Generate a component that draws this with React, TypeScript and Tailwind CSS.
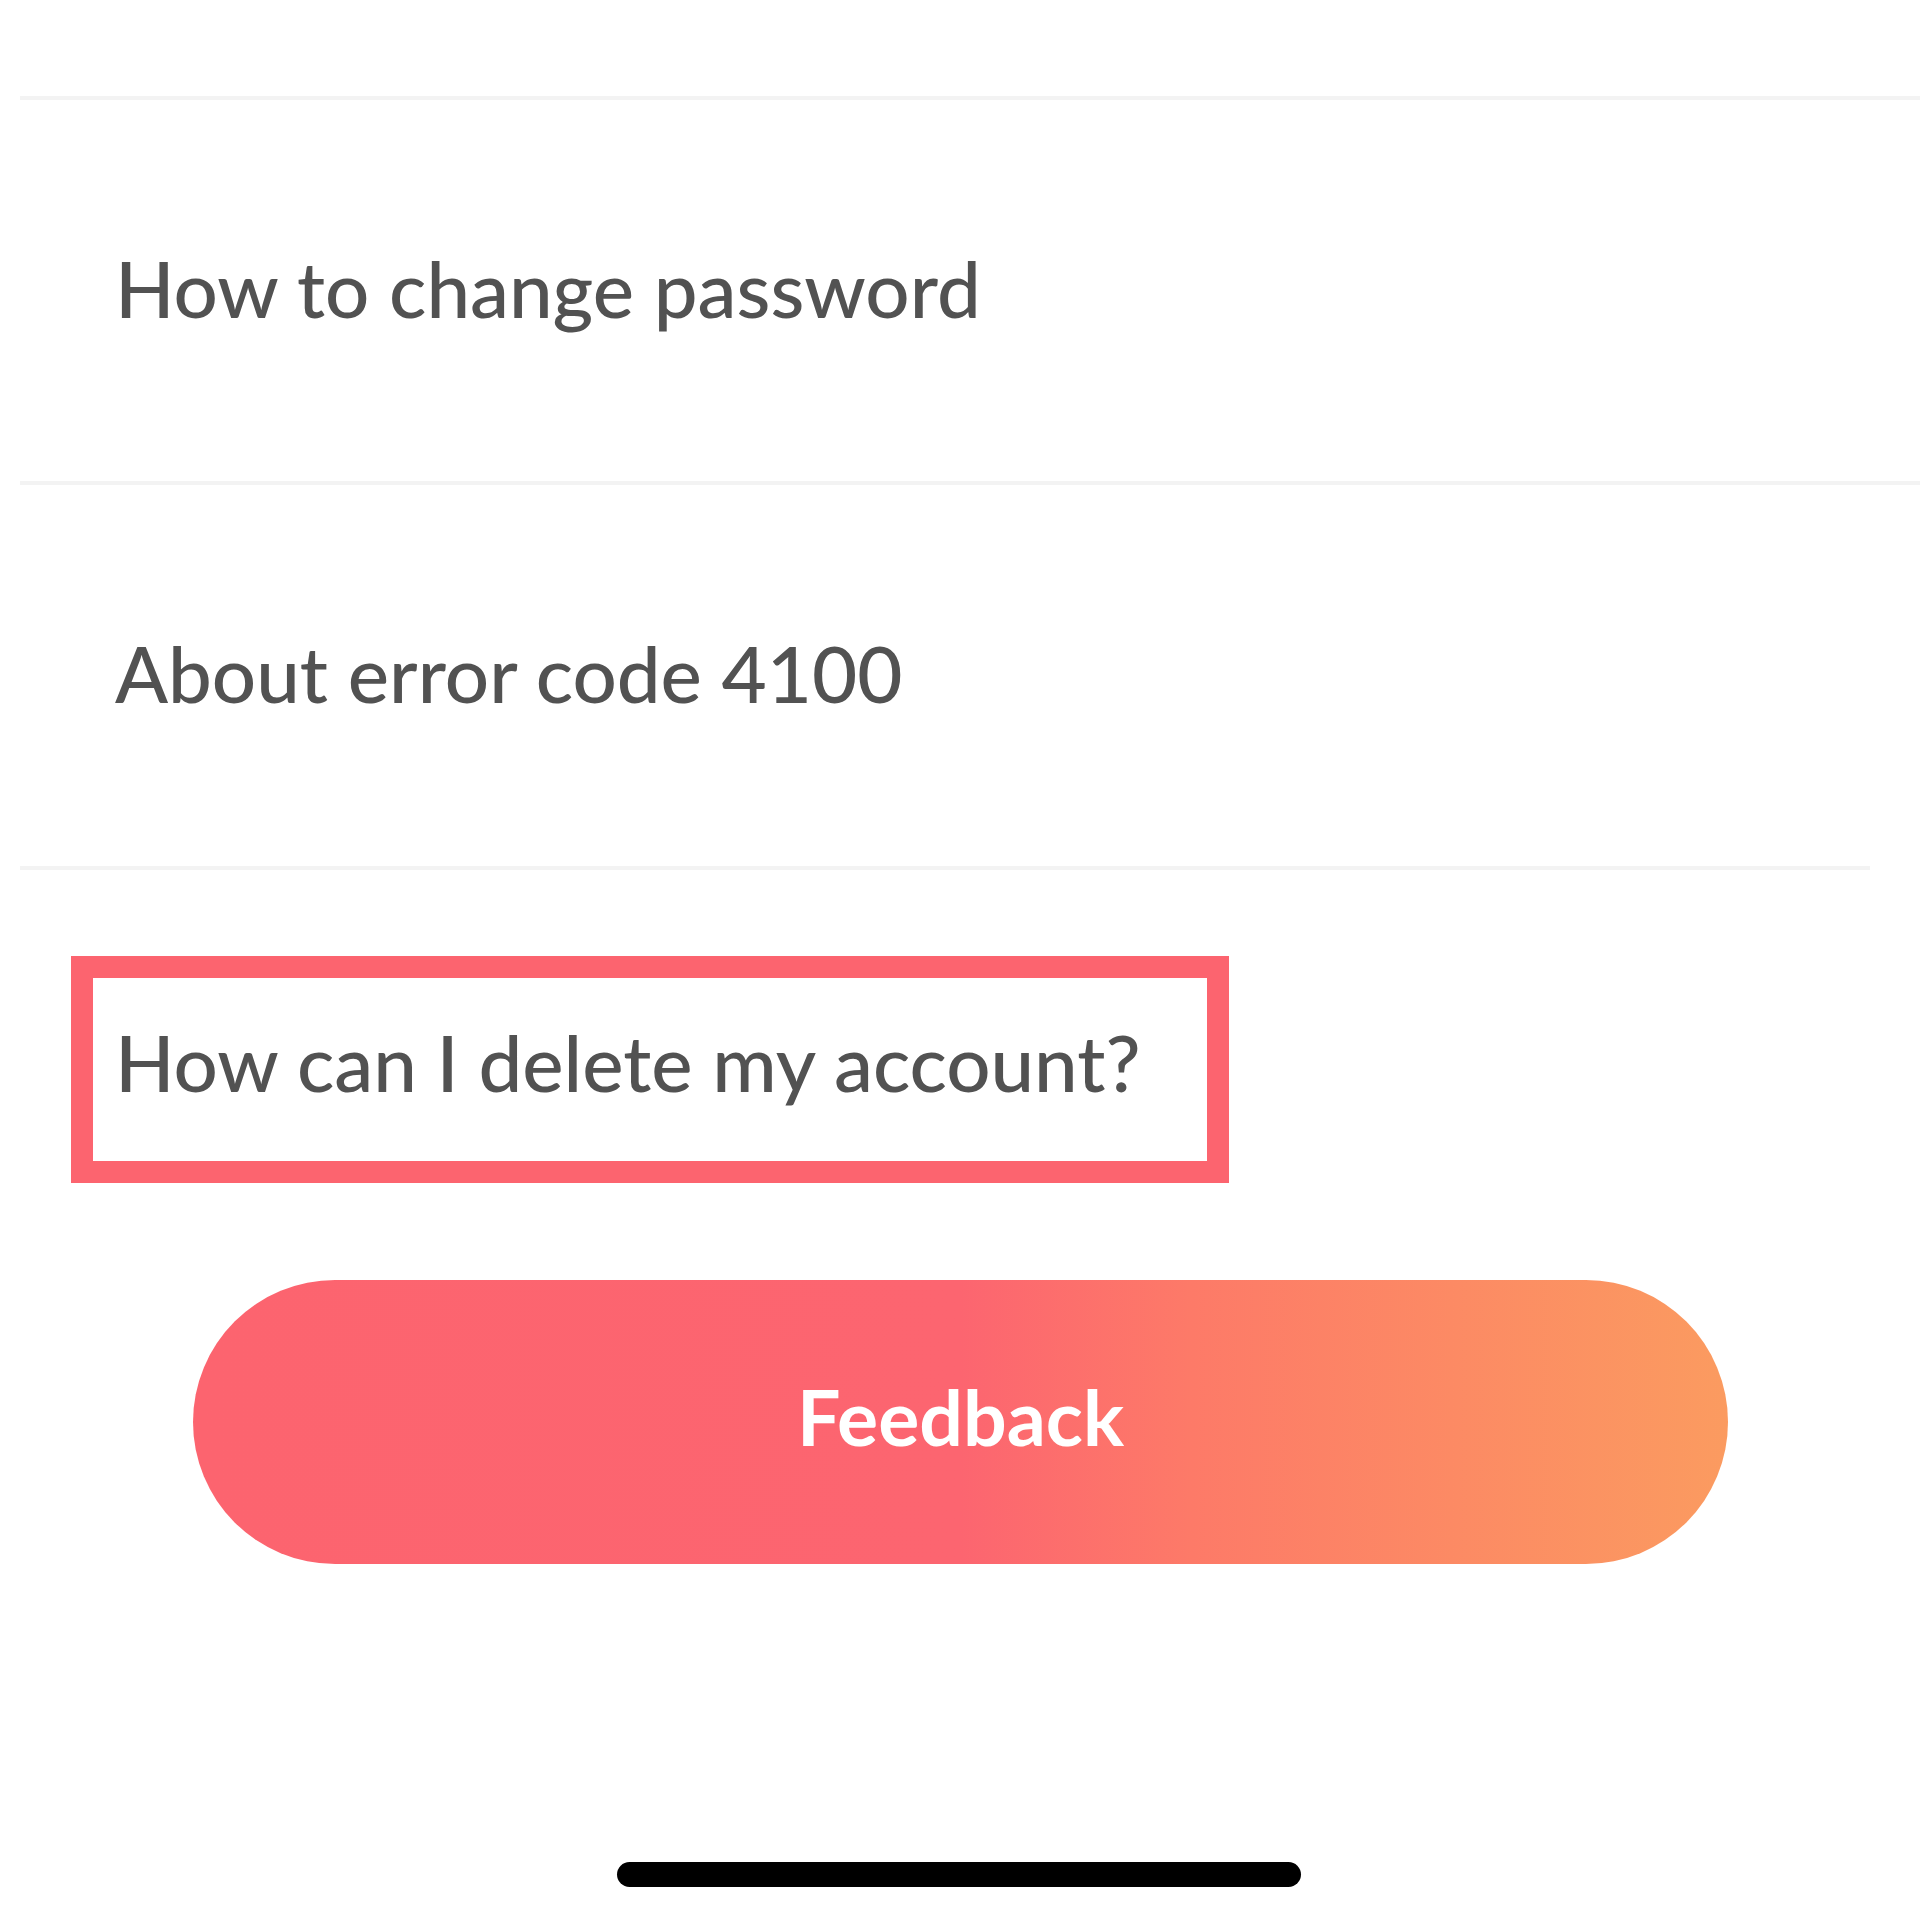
import React from 'react'

const ROWS = ['How to change password', 'About error code 4100']

export default function App() {
  return (
    <div className="w-[1920px] h-[1920px] bg-white overflow-hidden flex flex-col font-['Lato',sans-serif]">
      <div className="h-[96px]" />

      {ROWS.map((label) => (
        <div key={label} className="flex flex-col">
          <div className="ml-[20px] h-[4px] bg-[#f3f3f3]" />
          <div className="h-[381px] flex items-center pl-[115px]">
            <span className="text-[78px] leading-none font-medium text-[#525252] whitespace-nowrap -mt-[5px]">{label}</span>
          </div>
        </div>
      ))}

      <div className="ml-[20px] mr-[50px] h-[4px] bg-[#f3f3f3]" />

      {/* highlighted question */}
      <div className="mt-[86px] ml-[71px] w-[1158px] h-[227px] border-[22px] border-[#fc646f] flex items-center pl-[22px]">
        <span className="text-[78px] leading-none font-medium text-[#525252] whitespace-nowrap -mt-[16px]">How can I delete my account?</span>
      </div>

      <button className="mt-[97px] ml-[193px] w-[1535px] h-[284px] rounded-full bg-[linear-gradient(to_right,#fc646f_0%,#fc6570_50%,#fd7a68_65%,#fb9b60_100%)] flex items-center justify-center">
        <span className="text-[77px] leading-none font-bold text-white -mt-[12px]">Feedback</span>
      </button>

      <div className="mt-[298px] ml-[617px] w-[684px] h-[25px] rounded-full bg-black" />
    </div>
  )
}
